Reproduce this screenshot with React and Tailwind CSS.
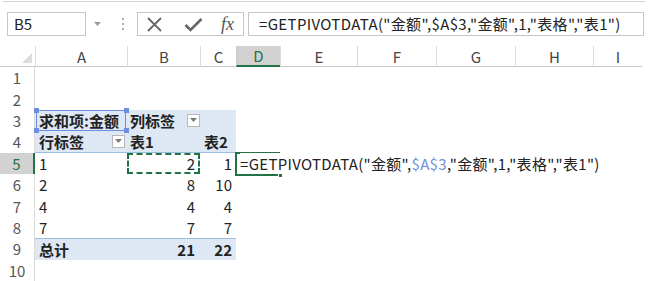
import React from "react";

const FONT = { fontFamily: '"Noto Sans CJK SC","Noto Sans",sans-serif' };
const COLS = "grid grid-cols-[35px_92px_73px_36px_44px_77px_79px_79px_78px_49px]";
const LETTERS = ["A", "B", "C", "D", "E", "F", "G", "H", "I"];

function Drop({ className = "" }) {
  return (
    <span className={"inline-flex items-center justify-center w-[13px] h-[13px] border border-[#b8b8b8] bg-white " + className}>
      <svg width="7" height="4" viewBox="0 0 7 4"><path d="M0 0h7L3.5 4z" fill="#7a7a7a" /></svg>
    </span>
  );
}

function Row({ n, active, children }) {
  return (
    <div className={COLS + " h-[21.4px] text-[15px] text-[#222] leading-none"}>
      <div
        className={
          "flex items-center justify-center border-r " +
          (active ? "bg-[#d2d2d2] text-[#217346] border-r-2 border-r-[#217346]" : "bg-white text-[#555] border-r-[#dadada]")
        }
      >
        {n}
      </div>
      {children}
    </div>
  );
}

function Empty({ span = 1 }) {
  return <div style={{ gridColumn: `span ${span} / span ${span}` }} />;
}

export default function App() {
  return (
    <div className="w-[655px] h-[281px] bg-white overflow-hidden relative" style={FONT}>
      <div className="ml-[3px] mr-[10px] mt-[1px] h-[1px] bg-[#d6d6d6]" />
      {/* formula bar */}
      <div className="flex items-center mt-[10px] h-[24px]">
        <div className="ml-[7px] w-[79px] h-[24px] border border-[#c6c6c6] flex items-center pl-[6px] text-[15px] text-[#222]">B5</div>
        <svg className="ml-[8px]" width="7" height="4" viewBox="0 0 7 4"><path d="M0 0h7L3.5 4z" fill="#9a9a9a" /></svg>
        <div className="ml-[21px] flex flex-col gap-[3px]">
          <span className="w-[2px] h-[2px] bg-[#b0b0b0]" />
          <span className="w-[2px] h-[2px] bg-[#b0b0b0]" />
          <span className="w-[2px] h-[2px] bg-[#b0b0b0]" />
        </div>
        <div className="ml-[13px] w-[107px] h-[24px] border border-[#c6c6c6] flex items-center">
          <svg className="ml-[8px]" width="17" height="15" viewBox="0 0 17 15">
            <path d="M2 1l13 13M15 1L2 14" stroke="#666" strokeWidth="1.8" fill="none" />
          </svg>
          <svg className="ml-[21px]" width="19" height="15" viewBox="0 0 19 15">
            <path d="M1.5 8l5 5L17.5 2" stroke="#666" strokeWidth="2.6" fill="none" />
          </svg>
          <span className="ml-[18px] text-[18px] italic text-[#555] leading-none" style={{ fontFamily: '"Liberation Serif",serif' }}>fx</span>
        </div>
        <div className="ml-[4px] w-[396px] h-[24px] border border-[#c6c6c6] flex items-center pl-[10px] text-[15px] tracking-[0.35px] text-[#222] whitespace-nowrap">
          =GETPIVOTDATA("金额",$A$3,"金额",1,"表格","表1")
        </div>
      </div>
      {/* column header */}
      <div className={COLS + " mt-[10px] h-[21px] text-[15px] text-[#444] leading-none"}>
        <div className="relative border-b border-[#c8c8c8]">
          <svg className="absolute right-[3px] bottom-[3px]" width="10" height="10" viewBox="0 0 10 10"><path d="M10 0v10H0z" fill="#dcdcdc" /></svg>
        </div>
        {LETTERS.map((l) =>
          l === "D" ? (
            <div key={l} className="flex items-center justify-center bg-[#d2d2d2] text-[#217346] border-b-2 border-[#217346] border-l border-l-[#c8c8c8]">{l}</div>
          ) : (
            <div key={l} className="flex items-center justify-center border-b border-[#c8c8c8] border-l border-l-[#dadada]">{l}</div>
          )
        )}
      </div>
      <Row n="1"><Empty span={9} /></Row>
      <Row n="2"><Empty span={9} /></Row>
      <Row n="3">
        <div className="relative bg-[#dde8f4] flex items-center pl-[4px] font-bold">
          <div className="absolute inset-x-[1px] inset-y-0 border-[1.5px] border-[#6b8fde] pointer-events-none" />
          <span className="absolute -left-[1px] -top-[2px] w-[5px] h-[5px] bg-[#6b8fde]" />
          <span className="absolute -right-[2px] -top-[2px] w-[5px] h-[5px] bg-[#6b8fde]" />
          <span className="absolute -left-[1px] -bottom-[2px] w-[5px] h-[5px] bg-[#6b8fde]" />
          <span className="absolute -right-[2px] -bottom-[2px] w-[5px] h-[5px] bg-[#6b8fde]" />
          求和项:金额
        </div>
        <div className="bg-[#dde8f4] flex items-center pl-[3px] font-bold">
          列标签<Drop className="ml-[12px]" />
        </div>
        <div className="bg-[#dde8f4]" />
        <Empty span={6} />
      </Row>
      <Row n="4">
        <div className="bg-[#dde8f4] border-b border-[#9dbde3] flex items-center pl-[4px] font-bold">
          行标签<Drop className="ml-auto mr-[2px]" />
        </div>
        <div className="bg-[#dde8f4] border-b border-[#9dbde3] flex items-center pl-[3px] font-bold">表1</div>
        <div className="bg-[#dde8f4] border-b border-[#9dbde3] flex items-center pl-[4px] font-bold">表2</div>
        <Empty span={6} />
      </Row>
      <Row n="5" active>
        <div className="flex items-center pl-[4px]">1</div>
        <div className="relative flex items-center justify-end pr-[5px]">
          <div className="absolute inset-0 border-2 border-dashed border-[#217346]" />
          2
        </div>
        <div className="flex items-center justify-end pr-[4px]">1</div>
        <div className="relative z-10">
          <div className="absolute -left-[1px] -top-[1px] w-[45px] h-[24px] border-2 border-[#217346]" />
          <span className="absolute -right-[3px] -bottom-[4px] w-[5px] h-[5px] bg-[#217346] border border-white" />
          <div className="absolute left-[4px] top-0 h-full flex items-center whitespace-nowrap bg-white pr-[2px] tracking-[0.3px]">
            =GETPIVOTDATA("金额",<span className="text-[#6f8fdc]">$A$3</span>,"金额",1,"表格","表1")
          </div>
        </div>
        <Empty span={5} />
      </Row>
      {[
        ["6", "2", "8", "10"],
        ["7", "4", "4", "4"],
        ["8", "7", "7", "7"],
      ].map(([n, a, b, c]) => (
        <Row key={n} n={n}>
          <div className="flex items-center pl-[4px]">{a}</div>
          <div className="flex items-center justify-end pr-[5px]">{b}</div>
          <div className="flex items-center justify-end pr-[4px]">{c}</div>
          <Empty span={6} />
        </Row>
      ))}
      <Row n="9">
        <div className="bg-[#dde8f4] border-t border-[#9dbde3] flex items-center pl-[4px] font-bold">总计</div>
        <div className="bg-[#dde8f4] border-t border-[#9dbde3] flex items-center justify-end pr-[5px] font-bold">21</div>
        <div className="bg-[#dde8f4] border-t border-[#9dbde3] flex items-center justify-end pr-[4px] font-bold">22</div>
        <Empty span={6} />
      </Row>
      <Row n="10"><Empty span={9} /></Row>
    </div>
  );
}
